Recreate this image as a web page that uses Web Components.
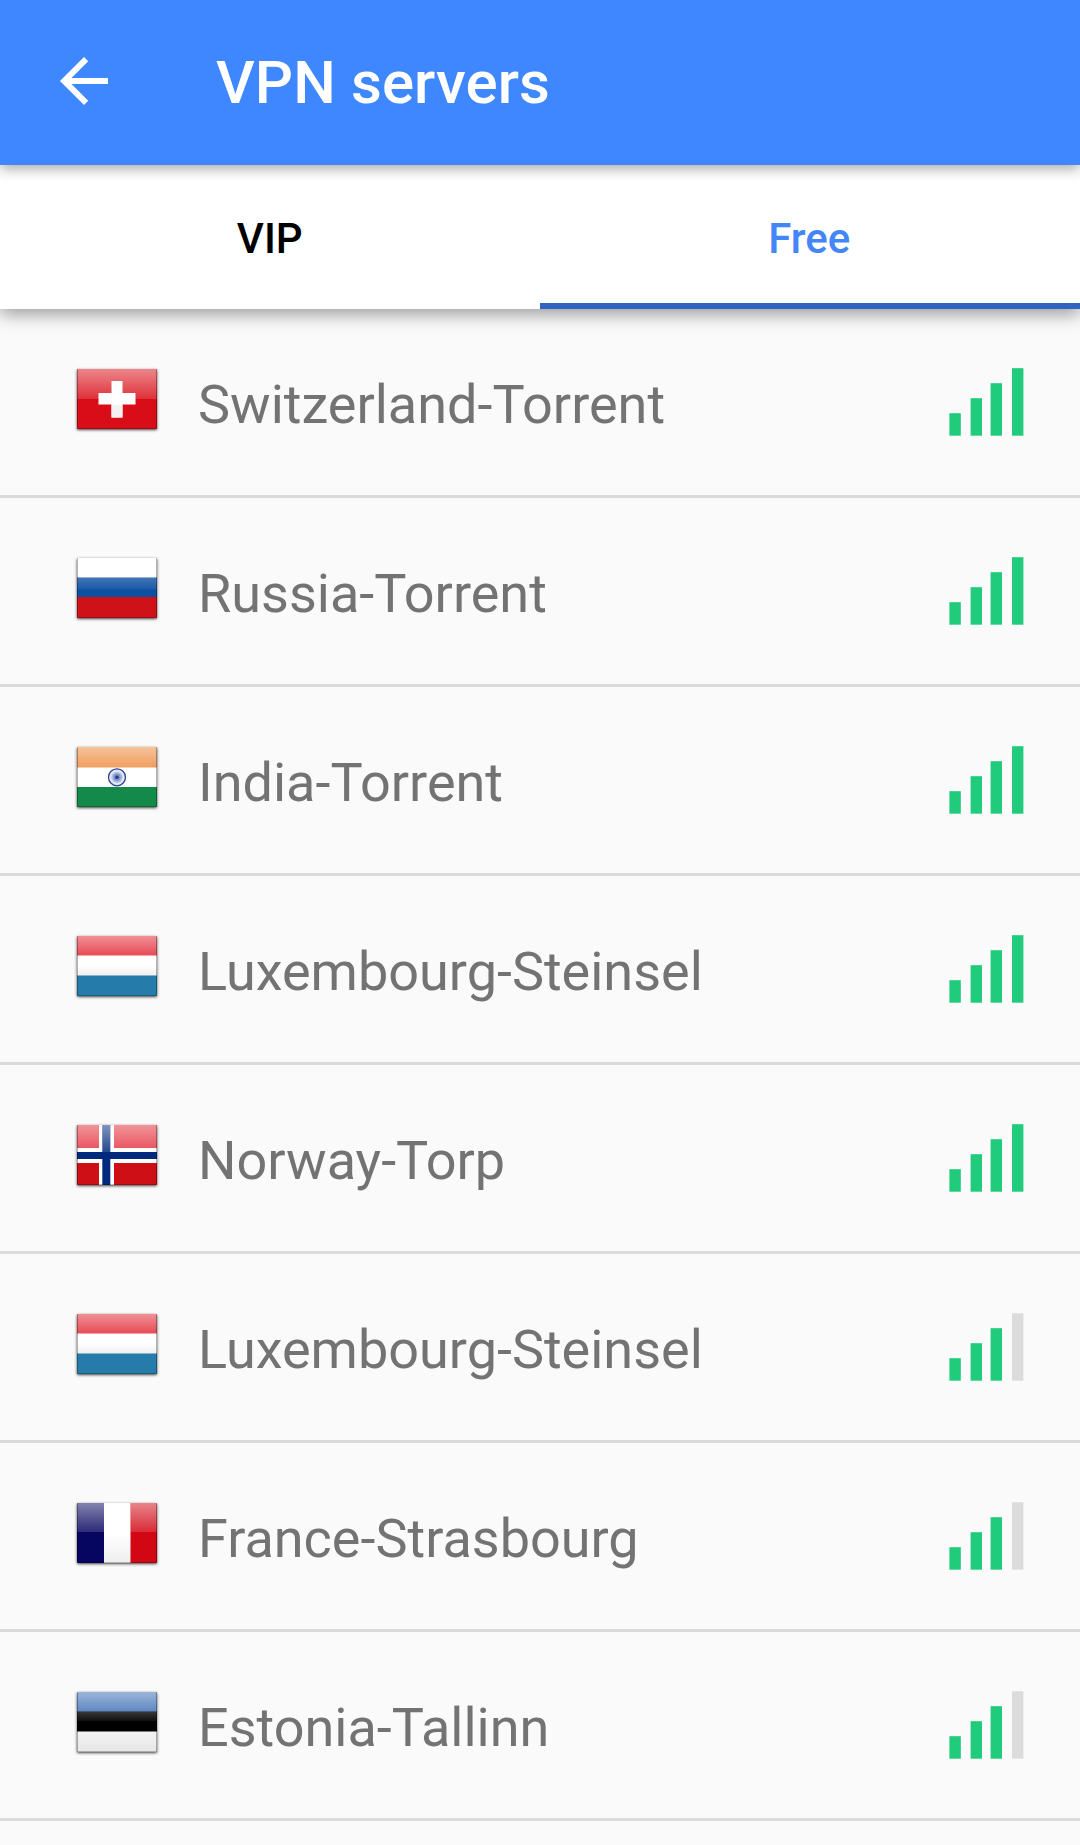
<!DOCTYPE html>
<html lang="en">
<head>
<meta charset="UTF-8">
<title>VPN servers</title>
<style>
    body {
        margin: 0;
        height: 1845px;
        overflow: hidden;
        background: #fafafa;
        font-family: Roboto, sans-serif;
    }
</style>
</head>
<body>
<app-toolbar>VPN servers</app-toolbar>
<tab-bar>
    <tab-item>VIP</tab-item>
    <tab-item active>Free</tab-item>
</tab-bar>
<server-list>
    <server-row country="ch" signal="4">Switzerland-Torrent</server-row>
    <server-row country="ru" signal="4">Russia-Torrent</server-row>
    <server-row country="in" signal="4">India-Torrent</server-row>
    <server-row country="lu" signal="4">Luxembourg-Steinsel</server-row>
    <server-row country="no" signal="4">Norway-Torp</server-row>
    <server-row country="lu" signal="3">Luxembourg-Steinsel</server-row>
    <server-row country="fr" signal="3">France-Strasbourg</server-row>
    <server-row country="ee" signal="3">Estonia-Tallinn</server-row>
</server-list>

<script>
class AppToolbar extends HTMLElement {
    connectedCallback() {
        this.attachShadow({ mode: 'open' });
        this.shadowRoot.innerHTML = `
            <style>
                :host {
                    display: flex;
                    align-items: center;
                    box-sizing: border-box;
                    height: 165px;
                    padding-left: 48px;
                    background: #3f87ff;
                    color: white;
                    position: relative;
                    z-index: 2;
                    box-shadow: 0 4px 12px rgba(0, 0, 0, 0.33);
                }
                svg {
                    width: 72px;
                    height: 72px;
                    margin-bottom: 3px;
                }
                h1 {
                    margin: 1px 0 0 96px;
                    font-size: 60px;
                    font-weight: 500;
                    line-height: 70px;
                    letter-spacing: 0.1px;
                }
            </style>
            <svg viewBox="0 0 24 24"><path fill="#fff" d="M20 11H7.83l5.59-5.59L12 4l-8 8 8 8 1.41-1.41L7.83 13H20v-2z"/></svg>
            <h1><slot></slot></h1>
        `;
    }
}
customElements.define('app-toolbar', AppToolbar);

class TabBar extends HTMLElement {
    connectedCallback() {
        this.attachShadow({ mode: 'open' });
        this.shadowRoot.innerHTML = `
            <style>
                :host {
                    display: flex;
                    height: 144px;
                    background: white;
                    position: relative;
                    z-index: 1;
                    box-shadow: 0 6px 16px rgba(0, 0, 0, 0.36);
                }
            </style>
            <slot></slot>
        `;
    }
}
customElements.define('tab-bar', TabBar);

class TabItem extends HTMLElement {
    connectedCallback() {
        this.attachShadow({ mode: 'open' });
        this.shadowRoot.innerHTML = `
            <style>
                :host {
                    flex: 1;
                    display: flex;
                    align-items: center;
                    justify-content: center;
                    box-sizing: border-box;
                    padding-top: 8px;
                    border-bottom: 6px solid transparent;
                    color: black;
                    font-size: 42px;
                    font-weight: 500;
                }
                :host([active]) {
                    padding-right: 1px;
                    color: #4386f7;
                    border-color: #3064c0;
                }
            </style>
            <slot></slot>
        `;
    }
}
customElements.define('tab-item', TabItem);

class ServerList extends HTMLElement {
    connectedCallback() {
        this.attachShadow({ mode: 'open' });
        this.shadowRoot.innerHTML = `
            <style>
                :host {
                    display: flex;
                    flex-direction: column;
                }
            </style>
            <slot></slot>
        `;
    }
}
customElements.define('server-list', ServerList);

const FLAGS = {
    ch: `<rect width="80" height="60" fill="#d90d17"/>
        <rect width="80" height="30" fill="url(#gloss)"/>
        <path fill="#fff" d="M34.5 12h11v12h13v11.5h-13v13h-11v-13h-13V24h13z"/>
        <path fill="#f3f1f1" d="M34.5 36h11v12.5h-11z"/>`,
    ru: `<rect width="80" height="20" fill="#fff"/>
        <rect y="19.5" width="80" height="20" fill="#0c50a2"/>
        <rect y="19.5" width="80" height="12" fill="url(#soft)"/>
        <rect y="39" width="80" height="21" fill="#cf1217"/>`,
    in: `<rect width="80" height="21" fill="#ef9854"/>
        <rect width="80" height="21" fill="url(#band)"/>
        <rect y="20.5" width="80" height="20" fill="#fff"/>
        <rect y="40" width="80" height="20" fill="#138a49"/>
        <circle cx="40" cy="30.3" r="8.5" fill="#e3e8f5" stroke="#2d4291" stroke-width="1.3"/>
        <circle cx="40" cy="30.3" r="5.6" fill="#b3c0e1"/>
        <circle cx="40" cy="30.3" r="3.7" fill="#7f92c9"/>
        <circle cx="40" cy="30.3" r="1.8" fill="#263b8d"/>`,
    lu: `<rect width="80" height="20" fill="#e53f4a"/>
        <rect width="80" height="20" fill="url(#band)"/>
        <rect y="19.5" width="80" height="20.5" fill="url(#white)"/>
        <rect y="39.5" width="80" height="20.5" fill="#257ba9"/>`,
    no: `<rect width="80" height="60" fill="#cf0f16"/>
        <rect width="80" height="30" fill="#e32733"/>
        <rect width="80" height="30" fill="url(#gloss)"/>
        <path fill="#fff" d="M22 0h15v23h43v15H37v22H22V38H0V23h22z"/>
        <path fill="#00287d" d="M25.3 0h8v27H80v7H33.3v26h-8V34H0v-7h25.3z"/>
        <rect x="25.3" width="8" height="27" fill="url(#gloss)"/>`,
    fr: `<rect width="80" height="60" fill="url(#white)"/>
        <rect width="27" height="60" fill="#06055f"/>
        <rect x="53.5" width="26.5" height="60" fill="#d20714"/>
        <rect width="27" height="29" fill="url(#gloss)"/>
        <rect x="53.5" width="26.5" height="29" fill="url(#gloss)"/>`,
    ee: `<rect width="80" height="20" fill="#5480bf"/>
        <rect width="80" height="20" fill="url(#band)"/>
        <rect y="19.5" width="80" height="20.5" fill="#000"/>
        <rect y="19.5" width="80" height="9.5" fill="url(#soft)"/>
        <rect y="39.5" width="80" height="20.5" fill="url(#grey)"/>`
};

class CountryFlag extends HTMLElement {
    connectedCallback() {
        const code = this.getAttribute('code');

        this.attachShadow({ mode: 'open' });
        this.shadowRoot.innerHTML = `
            <style>
                :host {
                    display: block;
                    width: 80px;
                    height: 60px;
                    border-radius: 1px;
                    box-shadow: 0 1px 3px rgba(0, 0, 0, 0.75);
                }
                svg {
                    display: block;
                    border-radius: 1px;
                }
            </style>
            <svg width="80" height="60" viewBox="0 0 80 60">
                <defs>
                    <linearGradient id="gloss" x2="0" y2="1">
                        <stop offset="0" stop-color="#fff" stop-opacity="0.5"/>
                        <stop offset="1" stop-color="#fff" stop-opacity="0.15"/>
                    </linearGradient>
                    <linearGradient id="band" x2="0" y2="1">
                        <stop offset="0" stop-color="#fff" stop-opacity="0.42"/>
                        <stop offset="1" stop-color="#fff" stop-opacity="0.05"/>
                    </linearGradient>
                    <linearGradient id="soft" x2="0" y2="1">
                        <stop offset="0" stop-color="#fff" stop-opacity="0.22"/>
                        <stop offset="1" stop-color="#fff" stop-opacity="0.06"/>
                    </linearGradient>
                    <linearGradient id="white" x2="0" y2="1">
                        <stop offset="0.5" stop-color="#fff"/>
                        <stop offset="1" stop-color="#eee"/>
                    </linearGradient>
                    <linearGradient id="grey" x2="0" y2="1">
                        <stop offset="0" stop-color="#f3f3f3"/>
                        <stop offset="1" stop-color="#e6e6e6"/>
                    </linearGradient>
                </defs>
                ${FLAGS[code] || ''}
                <path d="M0.5 0v60M79.5 0v60" stroke="#000" stroke-opacity="0.3"/>
                <path d="M0 59.5h80" stroke="#000" stroke-opacity="0.25"/>
            </svg>
        `;
    }
}
customElements.define('country-flag', CountryFlag);

class SignalBars extends HTMLElement {
    connectedCallback() {
        const level = parseInt(this.getAttribute('level')) || 0;
        const bars = [[0, 22.5], [21.2, 37.5], [41.2, 52.5], [62.6, 67.5]];

        this.attachShadow({ mode: 'open' });
        this.shadowRoot.innerHTML = `
            <style>
                :host { display: block; }
                svg { display: block; }
                .on { fill: #20cb7c; }
                .off { fill: #dcdcdc; }
            </style>
            <svg width="75" height="68" viewBox="0 0 75 68">
                ${bars.map(([x, h], i) => `<rect class="${i < level ? 'on' : 'off'}" x="${x + 0.4}" y="${67.7 - h}" width="11.4" height="${h}"/>`).join('')}
            </svg>
        `;
    }
}
customElements.define('signal-bars', SignalBars);

class ServerRow extends HTMLElement {
    connectedCallback() {
        this.attachShadow({ mode: 'open' });
        this.shadowRoot.innerHTML = `
            <style>
                :host {
                    display: flex;
                    align-items: flex-start;
                    box-sizing: border-box;
                    height: 189px;
                    padding: 59px 56px 0 77px;
                    border-bottom: 3px solid #dadada;
                    color: #737373;
                }
                country-flag {
                    margin-top: 1px;
                }
                .name {
                    flex: 1;
                    margin: 5px 0 0 41px;
                    font-size: 54px;
                    line-height: 64px;
                }
            </style>
            <country-flag code="${this.getAttribute('country')}"></country-flag>
            <span class="name"><slot></slot></span>
            <signal-bars level="${this.getAttribute('signal')}"></signal-bars>
        `;
    }
}
customElements.define('server-row', ServerRow);
</script>
</body>
</html>
